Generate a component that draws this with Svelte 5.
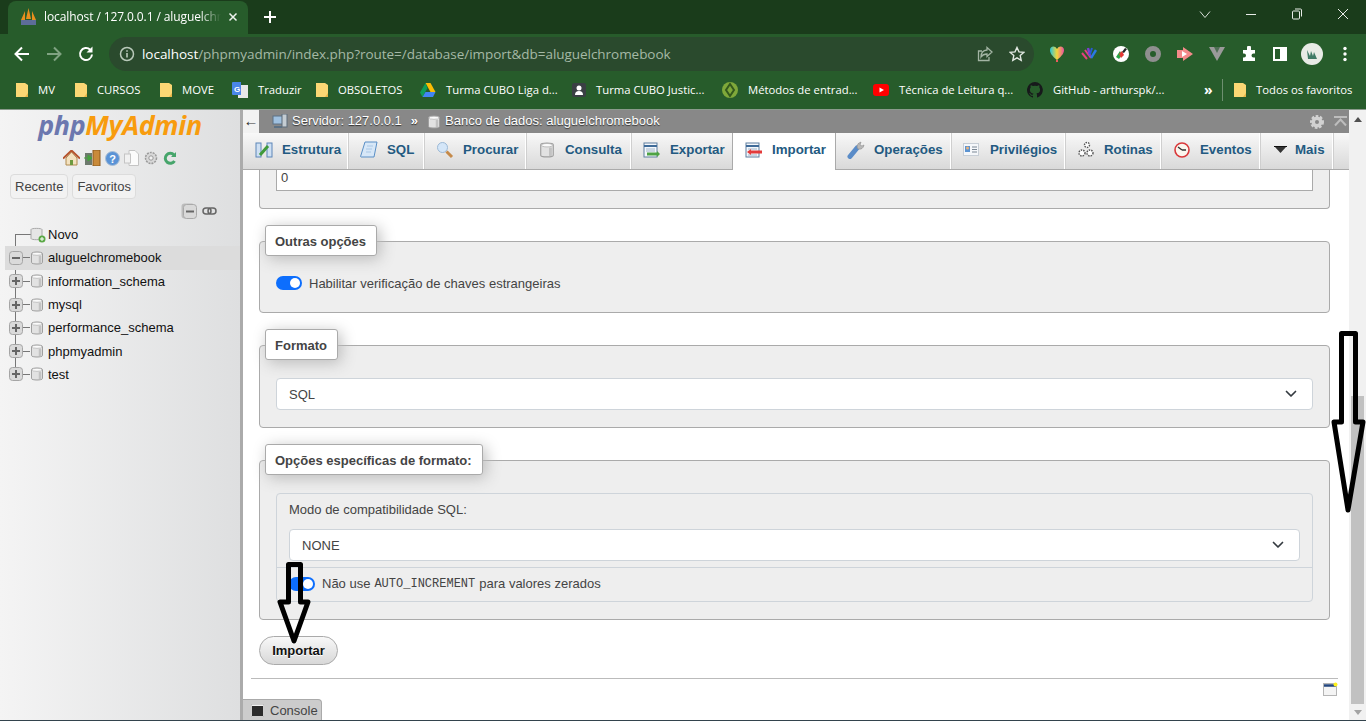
<script>
	const bookmarks = [
		{ icon: 'folder', label: 'MV', w: 59 },
		{ icon: 'folder', label: 'CURSOS', w: 85 },
		{ icon: 'folder', label: 'MOVE', w: 72 },
		{ icon: 'translate', label: 'Traduzir', w: 84 },
		{ icon: 'folder', label: 'OBSOLETOS', w: 104 },
		{ icon: 'drive', label: 'Turma CUBO Liga d...', w: 152 },
		{ icon: 'cubo', label: 'Turma CUBO Justic...', w: 150 },
		{ icon: 'metodos', label: 'Métodos de entrad...', w: 151 },
		{ icon: 'youtube', label: 'Técnica de Leitura q...', w: 154 },
		{ icon: 'github', label: 'GitHub - arthurspk/...', w: 154 }
	];

	const tabs = [
		{ id: 'estrutura', label: 'Estrutura' },
		{ id: 'sql', label: 'SQL' },
		{ id: 'procurar', label: 'Procurar' },
		{ id: 'db', label: 'Consulta' },
		{ id: 'exportar', label: 'Exportar' },
		{ id: 'importar', label: 'Importar', active: true },
		{ id: 'operacoes', label: 'Operações' },
		{ id: 'privilegios', label: 'Privilégios' },
		{ id: 'rotinas', label: 'Rotinas' },
		{ id: 'eventos', label: 'Eventos' },
		{ id: 'mais', label: 'Mais' }
	];

	const databases = [
		{ label: 'aluguelchromebook', open: true },
		{ label: 'information_schema' },
		{ label: 'mysql' },
		{ label: 'performance_schema' },
		{ label: 'phpmyadmin' },
		{ label: 'test' }
	];
</script>

{#snippet folder()}
	<svg width="12" height="16" viewBox="0 0 12 16"><path d="M0 1h9l3 2v12H0z" fill="#fbd774" /><path d="M9 15h3V11z" fill="#e7b649" /></svg>
{/snippet}

{#snippet db(size = 14)}
	<svg width={size} height={size} viewBox="0 0 14 14">
		<path d="M1.500 2.500C1.500 .5 12.500 .5 12.500 2.500v9c0 2-11 2-11 0z" fill="#e2e2e2" stroke="#9f9f9f" />
		<ellipse cx="7" cy="2.800" rx="5" ry="1.500" fill="#fbfbfb" stroke="#b0b0b0" stroke-width=".7" />
		<path d="M10 4.800v7.400" stroke="#c2c2c2" stroke-width="2.500" />
	</svg>
{/snippet}

{#snippet expander(open)}
	<svg class="expander" width="14" height="14" viewBox="0 0 14 14">
		<rect x=".5" y=".5" width="13" height="13" rx="3" fill="#dadada" stroke="#a5a5a5" />
		<path d={open ? 'M3 7h8' : 'M3 7h8M7 3v8'} stroke="#666" stroke-width="2" />
	</svg>
{/snippet}

{#snippet chevron()}
	<svg width="12" height="8" viewBox="0 0 12 8"><path d="M1.500 1.500 6 6l4.500-4.500" fill="none" stroke="#343a40" stroke-width="1.700" stroke-linecap="round" stroke-linejoin="round" /></svg>
{/snippet}

{#snippet tabIcon(id)}
	{#if id === 'estrutura'}
		<svg width="18" height="16" viewBox="0 0 18 16"><rect x="1" y="1" width="5" height="14" fill="#cfe0f3" stroke="#5d86b8" /><rect x="12" y="1" width="5" height="14" fill="#cfe0f3" stroke="#5d86b8" /><path d="M5 13 13 4" stroke="#3f9a3a" stroke-width="3" /></svg>
	{:else if id === 'sql'}
		<svg width="18" height="18" viewBox="0 0 18 18"><path d="M5 1h12l-3 15H1q-1 0 0-2z" fill="#d7e7f7" stroke="#5a8fc6" /><path d="M7 5h6M6 8h6M6 11h5" stroke="#a9c7e6" /></svg>
	{:else if id === 'procurar'}
		<svg width="18" height="18" viewBox="0 0 18 18"><circle cx="6.500" cy="6.500" r="5" fill="#d4e6f8" stroke="#9cb9d6" /><path d="m10.500 10.500 5.500 5.500" stroke="#c58a4a" stroke-width="3" /></svg>
	{:else if id === 'db'}
		{@render db(16)}
	{:else if id === 'exportar'}
		<svg width="18" height="16" viewBox="0 0 18 16"><rect x="1" y="1" width="13" height="14" fill="#f4f7fb" stroke="#5f7f9f" /><path d="M1 4h13" stroke="#3f6b99" stroke-width="2" /><path d="M3 7h9M3 9h9" stroke="#9fb4c9" /><path d="M4 12h10" stroke="#4ea345" stroke-width="3" /><path d="m14 9 3 3-3 3z" fill="#4ea345" /></svg>
	{:else if id === 'importar'}
		<svg width="18" height="16" viewBox="0 0 18 16"><rect x="1" y="1" width="13" height="14" fill="#f4f7fb" stroke="#5f7f9f" /><path d="M1 4h13" stroke="#3f6b99" stroke-width="2" /><path d="M3 7h9M3 13h9" stroke="#9fb4c9" /><path d="M6 10h11" stroke="#e33b3b" stroke-width="3" /><path d="M6 7 2 10l4 3z" fill="#e33b3b" /></svg>
	{:else if id === 'operacoes'}
		<svg width="18" height="18" viewBox="0 0 18 18"><path d="M3 15.500 10 7" stroke="#5a8cc8" stroke-width="5" stroke-linecap="round" /><path d="M10 6q0-4 4-5l-1 3 2 1 2-1q-1 5-6 4z" fill="#b8b8b8" stroke="#8d8d8d" stroke-width=".6" /></svg>
	{:else if id === 'privilegios'}
		<svg width="18" height="14" viewBox="0 0 18 14"><rect x=".5" y=".5" width="15" height="12" fill="#f5f7fa" stroke="#c7ced6" /><rect x="2" y="3" width="5" height="6" fill="#5b93d1" /><circle cx="4.500" cy="5" r="1.500" fill="#e9b47c" /><path d="M9 4h5M9 6.500h5M9 9h5" stroke="#7b8794" /></svg>
	{:else if id === 'rotinas'}
		<svg width="18" height="18" viewBox="0 0 18 18" fill="#fff" stroke="#555"><circle cx="10" cy="4" r="2.500" stroke-dasharray="1.500 1" stroke-width="1.400" /><circle cx="5" cy="12" r="3" stroke-dasharray="1.500 1" stroke-width="1.400" /><circle cx="13" cy="12" r="3" stroke-dasharray="1.500 1" stroke-width="1.400" /></svg>
	{:else if id === 'eventos'}
		<svg width="18" height="18" viewBox="0 0 18 18"><circle cx="9" cy="9" r="7" fill="#fbf6ee" stroke="#d9383a" stroke-width="1.600" /><path d="M9 9 5 6M9 9h4" stroke="#333" stroke-width="1.400" /></svg>
	{:else}
		<svg class="mais" width="13" height="8" viewBox="0 0 13 8"><path d="M1 1h11L6.500 7z" fill="#333" /><path d="M0 .5h13" stroke="#111" /></svg>
	{/if}
{/snippet}

<div class="window">
	<header class="chrome">
		<div class="tabstrip">
			<div class="browser-tab">
				<svg width="17" height="18" viewBox="0 0 17 18"><path d="M8.500 0 6 11h5zM5 3 1 12h4zM12 3l4 9h-4z" fill="#e88f1e" /><rect x="1" y="12" width="15" height="5" fill="#5d6d99" /></svg>
				<span class="tab-title">localhost / 127.0.0.1 / aluguelchr</span>
				<svg class="tab-close" width="10" height="10" viewBox="0 0 10 10"><path d="m1.500 1.500 7 7m0-7-7 7" stroke="#eef3ee" stroke-width="1.500" /></svg>
			</div>
			<svg class="new-tab" width="14" height="14" viewBox="0 0 14 14"><path d="M7 1v12M1 7h12" stroke="#fff" stroke-width="2" /></svg>
			<div class="win-controls">
				<svg width="12" height="12" viewBox="0 0 12 12"><path d="m1 3.500 5 6 5-6" fill="none" stroke="#d7ded7" /></svg>
				<svg width="12" height="12" viewBox="0 0 12 12"><path d="M1 6.500h10" stroke="#e8ece8" /></svg>
				<svg width="12" height="12" viewBox="0 0 12 12"><rect x="1.500" y="3" width="7" height="8" rx="1" fill="none" stroke="#e8ece8" /><path d="M4 1h5.500q1 0 1 1v6.500" fill="none" stroke="#e8ece8" /></svg>
				<svg width="12" height="12" viewBox="0 0 12 12"><path d="m1 1 10 10M11 1 1 11" stroke="#e8ece8" /></svg>
			</div>
		</div>

		<div class="toolbar">
			<svg width="18" height="18" viewBox="0 0 18 18"><path d="M16 9H3m6-6.500L2.500 9 9 15.500" fill="none" stroke="#fff" stroke-width="2" /></svg>
			<svg width="18" height="18" viewBox="0 0 18 18"><path d="M2 9h13M9 2.500 15.500 9 9 15.500" fill="none" stroke="#80a382" stroke-width="2" /></svg>
			<svg width="18" height="18" viewBox="0 0 18 18"><path d="M15 9.500A6 6 0 1 1 13.200 4.700" fill="none" stroke="#fff" stroke-width="2" /><path d="M15.500 1.500v6h-6z" fill="#fff" /></svg>
			<div class="omnibox">
				<svg width="16" height="16" viewBox="0 0 16 16"><circle cx="8" cy="8" r="6.500" fill="none" stroke="#b9c9ba" stroke-width="1.500" /><path d="M8 7v4.500M8 4.200v1.500" stroke="#b9c9ba" stroke-width="1.600" /></svg>
				<div class="url"><b>localhost</b>/phpmyadmin/index.php?route=/database/import&amp;db=aluguelchromebook</div>
				<svg width="16" height="16" viewBox="0 0 16 16"><path d="M10 1.500 15 6l-5 4.500V8Q6 8 4 11q0-6.500 6-7zM12 11v3.500H1.500V5H5" fill="none" stroke="#a3b5a4" stroke-width="1.300" /></svg>
				<svg class="star" width="16" height="16" viewBox="0 0 16 16"><path d="m8 1.500 2 4.400 4.800.5-3.600 3.200 1 4.700L8 11.900l-4.200 2.400 1-4.700L1.200 6.400 6 5.900z" fill="none" stroke="#e3e9e3" stroke-width="1.400" /></svg>
			</div>
			<div class="extensions">
				<svg width="16" height="18" viewBox="0 0 16 18"><defs><linearGradient id="heart" x1="0" x2="1"><stop offset="0" stop-color="#27c6d9" /><stop offset=".5" stop-color="#f2d73a" /><stop offset="1" stop-color="#ea4fa0" /></linearGradient></defs><path d="M8 15C3 11 1 8 1 5c0-4 5-5 7-1 2-4 7-3 7 1 0 3-2 6-7 10z" fill="url(#heart)" /><path d="M7 15h2v2H7z" fill="#e85c5c" /></svg>
				<svg width="16" height="16" viewBox="0 0 16 16"><path d="M1 7l5 6M4 4l6 8" stroke="#e2417f" stroke-width="2" /><path d="M7 2l2 8" stroke="#7b3fd1" stroke-width="2.500" /><path d="M15 4l-5 8" stroke="#2a78e4" stroke-width="2.500" /><path d="M11 2l-2 6" stroke="#2a58d4" stroke-width="2" /></svg>
				<svg width="16" height="16" viewBox="0 0 16 16"><circle cx="8" cy="8" r="8" fill="#fff" /><path d="M3 11 7 5l2 4-3 4z" fill="#28a745" /><path d="M6 8l3-3 2 4-3 3z" fill="#e53935" /><path d="M9 6l3-4 2 1-3 4z" fill="#222" /></svg>
				<svg width="16" height="16" viewBox="0 0 16 16"><circle cx="8" cy="8" r="5.500" fill="none" stroke="#8f8f8f" stroke-width="5" /></svg>
				<svg width="16" height="14" viewBox="0 0 16 14"><path d="M0 3h6V0l10 7-10 7v-3H0z" fill="#f48a8a" /><path d="M5 4l5 3-5 3z" fill="#fff" /></svg>
				<svg width="16" height="14" viewBox="0 0 16 14"><path d="M0 0h16L8 14z" fill="#9a9a9a" /><path d="M5 0h6L8 6z" fill="#4f6f55" /></svg>
				<svg width="16" height="16" viewBox="0 0 16 16"><path d="M6 1.500a2 2 0 0 1 4 0V4h4v3.500h-1.500a2 2 0 0 0 0 4H14V15H2v-3.500h1a2 2 0 0 0 0-4H2V4h4z" fill="#fff" /></svg>
				<svg width="14" height="14" viewBox="0 0 14 14"><rect x="1" y="1" width="12" height="12" fill="none" stroke="#fff" stroke-width="2" /><rect x="7" y="1" width="6" height="12" fill="#fff" /></svg>
				<svg class="avatar" width="22" height="22" viewBox="0 0 22 22"><circle cx="11" cy="11" r="11" fill="#e8ebe6" /><path d="M6 7l3 6 1-5 2 5 1-4 3 7H7z" fill="#3f7a66" /></svg>
				<svg class="dots" width="4" height="16" viewBox="0 0 4 16"><circle cx="2" cy="2.500" r="1.700" fill="#fff" /><circle cx="2" cy="8" r="1.700" fill="#fff" /><circle cx="2" cy="13.500" r="1.700" fill="#fff" /></svg>
			</div>
		</div>

		<div class="bookmarks">
			{#each bookmarks as b}
				<div class="bookmark" style="width: {b.w}px">
					{#if b.icon === 'folder'}
						{@render folder()}
					{:else if b.icon === 'translate'}
						<svg width="16" height="16" viewBox="0 0 16 16"><rect x="6" y="3" width="10" height="13" fill="#e8e8e8" /><path d="M0 1q0-1 1-1h8v13H1q-1 0-1-1z" fill="#4a86e8" /><text x="2" y="9.500" font-size="8" font-weight="700" fill="#fff" font-family="Liberation Sans, sans-serif">G</text></svg>
					{:else if b.icon === 'drive'}
						<svg width="16" height="14" viewBox="0 0 16 14"><path d="M5.500 0h5l5 9h-5z" fill="#fbbc04" /><path d="M5.500 0 0 9.500l2.500 4.500 5-9z" fill="#0f9d58" /><path d="M2.500 14h10.500l2.500-5H5.500z" fill="#4285f4" /></svg>
					{:else if b.icon === 'cubo'}
						<svg width="14" height="14" viewBox="0 0 14 14"><rect width="14" height="14" rx="2" fill="#3a3f44" /><circle cx="7" cy="5" r="2.500" fill="#fff" /><path d="M3 12q0-4 4-4t4 4z" fill="#fff" /></svg>
					{:else if b.icon === 'metodos'}
						<svg width="16" height="16" viewBox="0 0 16 16"><circle cx="8" cy="8" r="8" fill="#7fa83a" /><path d="M8 2 4 8l4 6 4-6z" fill="none" stroke="#33591d" stroke-width="2" /></svg>
					{:else if b.icon === 'youtube'}
						<svg width="16" height="12" viewBox="0 0 16 12"><rect width="16" height="12" rx="3" fill="#f00" /><path d="M6.500 3.500v5L11 6z" fill="#fff" /></svg>
					{:else}
						<svg width="16" height="16" viewBox="0 0 16 16"><path d="M8 0a8 8 0 0 0-2.500 15.600c.4.100.5-.2.500-.4v-1.400c-2.200.5-2.700-1-2.700-1-.4-.9-.9-1.200-.9-1.200-.7-.5.100-.5.100-.5.800.1 1.200.8 1.200.8.700 1.200 1.900.9 2.300.7.100-.5.300-.9.500-1.100-1.800-.2-3.600-.9-3.600-4 0-.9.300-1.600.8-2.100-.1-.2-.4-1 .1-2.100 0 0 .7-.2 2.200.8a7.600 7.600 0 0 1 4 0c1.500-1 2.200-.8 2.200-.8.400 1.100.2 1.900.1 2.100.5.600.8 1.300.8 2.100 0 3.100-1.900 3.700-3.700 3.900.3.300.6.800.6 1.500v2.200c0 .2.100.5.600.4A8 8 0 0 0 8 0z" fill="#17191b" /></svg>
					{/if}
					<span>{b.label}</span>
				</div>
			{/each}
			<div class="more-bookmarks">»</div>
			<div class="bm-sep"></div>
			<div class="bookmark all">
				{@render folder()}
				<span>Todos os favoritos</span>
			</div>
		</div>
	</header>

	<div class="page">
		<aside class="sidebar">
			<div class="logo">php<span>MyAdmin</span></div>
			<div class="nav-icons">
				<svg width="17" height="16" viewBox="0 0 17 16"><path d="M3 8v7h11V8L8.500 2z" fill="#f3e2c0" stroke="#b08a4e" /><path d="M0 8.500 8.500 .5l8.500 8" fill="none" stroke="#b5532b" stroke-width="2" /><rect x="7" y="10" width="3" height="5" fill="#6c9a3f" /></svg>
				<svg width="17" height="16" viewBox="0 0 17 16"><rect x="9" y="0" width="7" height="16" fill="#c98a3a" stroke="#8b5a1e" /><rect x="1" y="3" width="7" height="12" fill="#6d7a6d" /><path d="M0 8h7M4 5l4 3-4 3z" fill="#47a23f" stroke="#47a23f" /></svg>
				<svg width="15" height="15" viewBox="0 0 15 15"><circle cx="7.500" cy="7.500" r="7" fill="#5a93d6" stroke="#a9bfd6" /><text x="7.500" y="11.500" font-size="11" font-weight="700" text-anchor="middle" fill="#fff" font-family="Liberation Sans, sans-serif">?</text></svg>
				<svg width="15" height="16" viewBox="0 0 15 16"><path d="M5 .5h6l3.500 3.500v11.500H5z" fill="#fbfbfb" stroke="#c4c4c4" /><rect x=".5" y="4" width="6" height="9" fill="#f1f1f1" stroke="#c4c4c4" /></svg>
				<svg width="16" height="16" viewBox="0 0 16 16"><circle cx="8" cy="8" r="5.500" fill="#d8d8d8" stroke="#9a9a9a" stroke-width="1.500" stroke-dasharray="2 1" /><circle cx="8" cy="8" r="2.200" fill="#f2f2f2" stroke="#999" /></svg>
				<svg width="14" height="15" viewBox="0 0 14 15"><path d="M11.500 10a5 5 0 1 1-.5-6" fill="none" stroke="#46a56b" stroke-width="3" /><path d="M13 1v5H8z" fill="#46a56b" /></svg>
			</div>
			<div class="side-tabs">
				<button>Recente</button>
				<button>Favoritos</button>
			</div>
			<div class="tree-tools">
				<svg width="16" height="16" viewBox="0 0 16 16"><rect x=".5" y=".5" width="13" height="15" rx="3" fill="#bdbdbd" /><rect x="2.500" y="1.500" width="13" height="14" rx="3" fill="#d9d9d9" stroke="#a9a9a9" /><path d="M5 8.500h8" stroke="#666" stroke-width="2" /></svg>
				<svg width="15" height="8" viewBox="0 0 15 8"><rect x="1" y="1" width="8" height="6" rx="3" fill="none" stroke="#666" stroke-width="1.500" /><rect x="6" y="1" width="8" height="6" rx="3" fill="none" stroke="#666" stroke-width="1.500" /></svg>
			</div>
			<ul class="tree">
				<li class="tree-row">
					<span class="stub"></span>
					<svg width="16" height="16" viewBox="0 0 16 16"><path d="M1 2.500C1 1 12 1 12 2.500v9c0 1.600-11 1.600-11 0z" fill="#e6e6e6" stroke="#a8a8a8" /><circle cx="12" cy="12" r="3.500" fill="#5aa845" /><path d="M10 12h4M12 10v4" stroke="#fff" /></svg>
					<span class="name novo">Novo</span>
				</li>
				{#each databases as d}
					<li class="tree-row" class:open={d.open}>
						{@render expander(d.open)}
						<span class="link"></span>
						{@render db()}
						<span class="name">{d.label}</span>
					</li>
				{/each}
			</ul>
		</aside>

		<main class="main">
			<div class="content-col">
				<div class="breadcrumb">
					<div class="back">←</div>
					<svg width="16" height="15" viewBox="0 0 16 15"><rect x="1" y="2" width="10" height="8" fill="#9fc0df" stroke="#5c7184" /><rect x="10" y="0" width="5" height="13" fill="#c4ccd2" stroke="#5c6b78" /><path d="M2 13h8" stroke="#5c7184" stroke-width="2" /></svg>
					<span class="crumb">Servidor: 127.0.0.1</span>
					<span class="crumb sep">»</span>
					{@render db()}
					<span class="crumb">Banco de dados: aluguelchromebook</span>
					<div class="crumb-right">
						<svg width="16" height="16" viewBox="0 0 16 16"><circle cx="8" cy="8" r="5.500" fill="#d2d2d2" stroke="#d2d2d2" stroke-width="3" stroke-dasharray="2.500 1.500" /><circle cx="8" cy="8" r="2" fill="#888" /></svg>
						<svg width="13" height="11" viewBox="0 0 13 11"><path d="M0 1h13M1 9.500l5.500-6 5.500 6" fill="none" stroke="#bdbdbd" stroke-width="2" /></svg>
					</div>
				</div>

				<nav class="tabs">
					{#each tabs as t}
						<div class="tab" class:active={t.active}>
							<span class="tab-icon">{@render tabIcon(t.id)}</span>
							<span>{t.label}</span>
						</div>
					{/each}
				</nav>

				<div class="content">
					<section class="panel first">
						<div class="input">0</div>
					</section>

					<section class="panel">
						<h3 class="legend">Outras opções</h3>
						<label class="check other"><span class="toggle"></span>Habilitar verificação de chaves estrangeiras</label>
					</section>

					<section class="panel">
						<h3 class="legend">Formato</h3>
						<div class="select">SQL {@render chevron()}</div>
					</section>

					<section class="panel">
						<h3 class="legend">Opções específicas de formato:</h3>
						<div class="inner">
							<div class="inner-top">
								<div class="inner-label">Modo de compatibilidade SQL:</div>
								<div class="select">NONE {@render chevron()}</div>
							</div>
							<label class="check inner-check"><span class="toggle"></span>Não use <code>AUTO_INCREMENT</code> para valores zerados</label>
						</div>
					</section>

					<button class="submit">Importar</button>
					<hr />
				</div>

				<svg class="notify" width="15" height="14" viewBox="0 0 15 14"><rect x=".5" y="1.500" width="13" height="12" fill="#f4f4f4" stroke="#b5b5b5" /><path d="M1 3.500h12" stroke="#24477f" stroke-width="2.500" /><circle cx="12.500" cy="2.500" r="2" fill="#fff11a" /></svg>
				<div class="console">
					<svg width="13" height="13" viewBox="0 0 13 13"><rect width="13" height="13" fill="#f2f2f2" stroke="#aaa" /><rect x="1" y="2" width="11" height="10" fill="#2b2b2b" /></svg>
					Console
				</div>
			</div>

			<div class="scrollbar">
				<span class="arrow-up"></span>
				<div class="track"><div class="thumb"></div></div>
				<span class="arrow-down"></span>
			</div>
		</main>
	</div>

	<!-- setas desenhadas por cima do print -->
	<svg class="mark mark-right" width="36" height="186" viewBox="0 0 36 186"><path d="M11.500 4.500H25.500V93H33L18 181 4 93H11.500Z" fill="none" stroke="#000" stroke-width="5" stroke-linejoin="round" /></svg>
	<svg class="mark mark-button" width="36" height="86" viewBox="0 0 36 86"><path d="M12.500 4.500H24.500V42H32L18 81 4 42H12.500Z" fill="none" stroke="#000" stroke-width="5" stroke-linejoin="round" /></svg>
</div>

<style>
	:global(body) {
		margin: 0;
		overflow: hidden;
	}

	ul {
		list-style: none;
		margin: 0;
		padding: 0;
	}

	.window {
		position: relative;
		height: 721px;
		box-sizing: border-box;
		display: flex;
		flex-direction: column;
		overflow: hidden;
		border-bottom: 1px solid #33434d;
		font-family: 'Liberation Sans', Arial, sans-serif;
		font-size: 13px;
		color: #444;
	}

	.chrome {
		font-family: 'Open Sans', 'Noto Sans', sans-serif;
		color: #fff;
	}

	.tabstrip {
		position: relative;
		height: 34px;
		background: #1a3c1b;
		display: flex;
		align-items: flex-end;
		padding-left: 8px;
	}
	.browser-tab {
		width: 240px;
		height: 33px;
		box-sizing: border-box;
		background: #275c2b;
		border-radius: 8px 8px 0 0;
		display: flex;
		align-items: center;
		padding: 0 10px 2px 12px;
		font-size: 12px;
	}
	.tab-title {
		flex: none;
		margin-left: 7px;
		white-space: nowrap;
		mask-image: linear-gradient(to right, #000 88%, transparent);
		letter-spacing: -0.1px;
	}
	.tab-close {
		margin-left: auto;
		flex: none;
	}
	.new-tab {
		margin: 0 0 10px 15px;
	}
	.win-controls {
		margin-left: auto;
		align-self: flex-start;
		margin-top: 8px;
		display: flex;
		gap: 34px;
		padding-right: 17px;
	}

	.toolbar {
		height: 40px;
		background: #275c2b;
		display: flex;
		align-items: center;
		padding: 0 0 2px 13px;
		gap: 14px;
	}
	.omnibox {
		width: 925px;
		height: 34px;
		box-sizing: border-box;
		border-radius: 17px;
		background: #2a4a2d;
		display: flex;
		align-items: center;
		padding: 0 9px 0 10px;
		gap: 8px;
	}
	.url {
		flex: 1;
		font-size: 13.5px;
		color: #a5b9a6;
		white-space: nowrap;
		letter-spacing: -0.04px;
		margin-left: -1px;
	}
	.url b {
		font-weight: 400;
		color: #fff;
	}
	.star {
		margin-left: 8px;
	}
	.extensions {
		display: flex;
		align-items: center;
		gap: 16px;
		margin-left: 1px;
	}
	.extensions svg {
		flex: none;
	}
	.avatar {
		margin-left: -2px;
	}
	.dots {
		margin-left: 4px;
	}

	.bookmarks {
		height: 34px;
		background: #275c2b;
		display: flex;
		align-items: center;
		padding: 0 0 6px 16px;
		border-bottom: 1px solid #8b9a8c;
		box-sizing: border-box;
		font-size: 11.3px;
	}
	.bookmark {
		display: flex;
		align-items: center;
		gap: 10px;
		white-space: nowrap;
		flex: none;
	}
	.more-bookmarks {
		margin-left: 23px;
		font-size: 14px;
		font-weight: 700;
		width: 18px;
	}
	.bm-sep {
		width: 1px;
		height: 22px;
		background: #6e8f70;
		margin-right: 11px;
	}

	.page {
		flex: 1;
		min-height: 0;
		display: flex;
	}

	.sidebar {
		width: 243px;
		flex: none;
		box-sizing: border-box;
		background: linear-gradient(to right, #f4f4f4, #dedfe0);
		border-right: 3px solid #ababab;
		color: #111;
	}
	.logo {
		font-family: 'Open Sans', sans-serif;
		font-size: 26.8px;
		font-weight: 700;
		font-style: italic;
		color: #6c78af;
		text-align: center;
		padding-top: 1px;
		line-height: 27px;
		letter-spacing: -0.3px;
		margin-bottom: 2px;
	}
	.logo span {
		color: #f89c0e;
	}
	.nav-icons {
		display: flex;
		align-items: center;
		gap: 4px;
		padding: 9px 0 0 63px;
		height: 18px;
	}
	.side-tabs {
		display: flex;
		gap: 4px;
		padding: 7px 0 0 10px;
	}
	.side-tabs button {
		height: 25px;
		padding: 0 4px;
		font: 13px 'Liberation Sans', sans-serif;
		color: #444;
		background: #f2f2f2;
		border: 1px solid #dcdcdc;
		border-radius: 4px;
	}
	.tree-tools {
		display: flex;
		align-items: center;
		gap: 5px;
		padding: 4px 0 0 181px;
		height: 16px;
	}
	.tree {
		position: relative;
		margin-top: 4px;
	}
	.tree::before {
		content: '';
		position: absolute;
		left: 15px;
		top: 12px;
		height: 140px;
		width: 1px;
		background: #777;
	}
	.tree-row {
		position: relative;
		height: 23.3px;
		display: flex;
		align-items: center;
		padding-left: 9px;
	}
	.tree-row.open {
		background: #dcdcdc;
		margin-left: 5px;
		padding-left: 4px;
	}
	.expander {
		position: relative;
		flex: none;
	}
	.stub {
		width: 21px;
		height: 1px;
		margin-left: 6px;
		margin-right: -6px;
		background: #777;
		flex: none;
	}
	.link {
		width: 7px;
		height: 1px;
		background: #777;
		flex: none;
	}
	.name {
		margin-left: 4px;
		font-size: 13px;
		color: #111;
	}
	.novo {
		margin-left: 2px;
	}

	.main {
		flex: 1;
		min-width: 0;
		display: flex;
	}
	.content-col {
		position: relative;
		flex: 1;
		min-width: 0;
		display: flex;
		flex-direction: column;
		overflow: hidden;
	}

	.breadcrumb {
		position: relative;
		z-index: 2;
		height: 23px;
		flex: none;
		background: #888;
		display: flex;
		align-items: center;
		color: #fff;
		font-size: 13px;
		text-shadow: 0 1px 1px #333;
	}
	.back {
		width: 16px;
		height: 100%;
		background: #f2f2f2;
		color: #333;
		text-align: center;
		font-size: 15px;
		line-height: 21px;
		text-shadow: none;
		margin-right: 13px;
	}
	.crumb {
		margin-left: 4px;
		padding-bottom: 2px;
	}
	.crumb.sep {
		margin: 0 9px;
		font-weight: 700;
	}
	.crumb-right {
		margin-left: auto;
		display: flex;
		align-items: center;
		gap: 9px;
		padding-right: 2px;
	}

	.tabs {
		position: relative;
		z-index: 2;
		height: 36px;
		flex: none;
		display: grid;
		grid-template-columns: 105px 76px 102px 105px 102px 102px 116px 114px 96px 99px 73px 1fr;
		background: linear-gradient(#f8f8f8, #d9d9d9);
		border-bottom: 1px solid #aaa;
	}
	.tab {
		display: flex;
		align-items: center;
		padding: 0 0 3px 12px;
		gap: 9px;
		font-weight: 700;
		font-size: 13.3px;
		color: #235a81;
		white-space: nowrap;
		border-right: 1px solid #fff;
		box-shadow: 1px 0 0 #cfcfcf;
	}
	.tab:last-child {
		padding-left: 14px;
		gap: 8px;
	}
	.tab:last-child .tab-icon {
		width: 13px;
	}
	.tab.active {
		background: #fff;
		margin-bottom: -1px;
		padding-bottom: 4px;
		position: relative;
		box-shadow: 1px 0 0 #aaa, -1px 0 0 #aaa;
		border-right: none;
	}
	.tab-icon {
		width: 18px;
		height: 18px;
		flex: none;
		display: flex;
		align-items: center;
		justify-content: center;
	}

	.content {
		flex: 1;
		min-height: 0;
		padding: 0 19px 0 16px;
	}

	.panel {
		background: #eee;
		border: 1px solid #aaa;
		border-radius: 4px;
		padding: 0 16px 17px;
		margin-bottom: 32px;
	}
	.panel.first {
		margin-top: -42px;
		border-top: none;
	}
	.legend {
		width: fit-content;
		margin: -17px 0 18px -11px;
		padding: 0 10px 0 9px;
		height: 31px;
		line-height: 31px;
		box-sizing: border-box;
		background: #fff;
		border: 1px solid #aaa;
		border-radius: 3px;
		box-shadow: 3px 3px 15px #bbb;
		font-size: 13px;
		font-weight: 700;
		color: #444;
	}

	.input {
		height: 63px;
		box-sizing: border-box;
		background: #fff;
		border: 1px solid #aaa;
		border-top: none;
		padding: 42px 4px 0;
		font-size: 13px;
		line-height: 16px;
	}

	.select {
		height: 32px;
		background: #fff;
		border: 1px solid #ced4da;
		border-radius: 4px;
		box-sizing: border-box;
		display: flex;
		align-items: center;
		justify-content: space-between;
		padding: 0 15px 0 12px;
		font-size: 13px;
		color: #444;
	}

	.check {
		display: flex;
		align-items: center;
		color: #444;
		font-size: 13px;
	}
	.check.other {
		height: 16px;
		padding: 1px 0 4px;
	}
	.toggle {
		position: relative;
		width: 26px;
		height: 14px;
		border-radius: 7px;
		background: #0d6efd;
		margin-right: 7px;
		flex: none;
	}
	.toggle::after {
		content: '';
		position: absolute;
		right: 2px;
		top: 2px;
		width: 10px;
		height: 10px;
		border-radius: 50%;
		background: #fff;
	}
	code {
		font-family: 'Liberation Mono', monospace;
		font-size: 12px;
		margin: 0 4px;
	}

	.inner {
		border: 1px solid #ced4da;
		border-radius: 4px;
	}
	.inner-top {
		padding: 0 12px 6px;
		border-bottom: 1px solid #ced4da;
	}
	.inner-label {
		height: 35px;
		line-height: 31px;
	}
	.inner-check {
		height: 33px;
		padding: 0 0 2px 12px;
		box-sizing: border-box;
	}

	.submit {
		display: block;
		width: 79px;
		height: 29px;
		padding: 0;
		margin-top: -16px;
		border: 1px solid #aaa;
		border-radius: 15px;
		background: linear-gradient(#f8f8f8, #d8d8d8);
		font: 700 13px 'Liberation Sans', sans-serif;
		color: #111;
		text-shadow: 0 1px 0 #fff;
	}
	hr {
		border: none;
		border-top: 1px solid #bbb;
		margin: 13px -8px 0 -8px;
	}

	.notify {
		position: absolute;
		right: 11px;
		bottom: 24px;
	}
	.console {
		position: absolute;
		left: 0;
		bottom: 0;
		width: 79px;
		height: 21px;
		box-sizing: border-box;
		background: #ccc;
		border-radius: 0 4px 0 0;
		border-right: 1px solid #aaa;
		border-top: 1px solid #aaa;
		display: flex;
		align-items: center;
		gap: 6px;
		padding-left: 8px;
		font-size: 13px;
		color: #444;
	}

	.scrollbar {
		width: 17px;
		flex: none;
		background: #f1f1f1;
		display: flex;
		flex-direction: column;
		align-items: center;
	}
	.track {
		flex: 1;
		width: 13px;
		display: flex;
		flex-direction: column;
		justify-content: flex-end;
	}
	.thumb {
		height: 308px;
		background: #c1c1c1;
	}
	.arrow-up,
	.arrow-down {
		width: 0;
		height: 0;
		border-left: 4px solid transparent;
		border-right: 4px solid transparent;
		margin: 7px 0;
	}
	.arrow-up {
		border-bottom: 5px solid #505050;
	}
	.arrow-down {
		border-top: 5px solid #a3a3a3;
		margin: 6px 0 5px;
	}

	.mark {
		position: absolute;
	}
	.mark-right {
		left: 1330px;
		top: 329px;
	}
	.mark-button {
		left: 276px;
		top: 560px;
	}
</style>
